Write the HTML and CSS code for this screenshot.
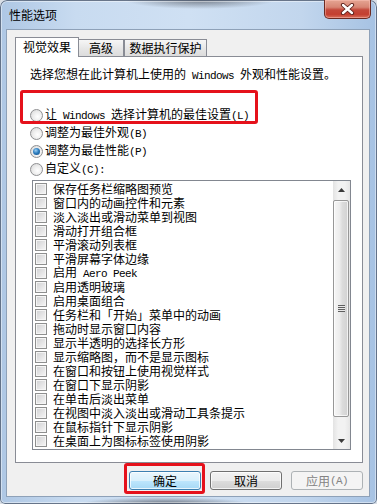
FILE: index.html
```html
<!DOCTYPE html>
<html lang="zh-CN">
<head>
<meta charset="utf-8">
<title>性能选项</title>
<link rel="stylesheet" href="styles.css">
</head>
<body>
<div class="window">
  <div class="titlebar">
    <span class="title">性能选项</span>
    <div class="close">
      <svg width="15" height="12" viewBox="0 0 15 12">
        <path d="M3 2 L12 10 M12 2 L3 10" stroke="#5a1e18" stroke-width="4.2" stroke-linecap="round"/>
        <path d="M3 2 L12 10 M12 2 L3 10" stroke="#ffffff" stroke-width="2.4" stroke-linecap="round"/>
      </svg>
    </div>
  </div>
  <div class="client">
    <div class="tabs">
      <div class="tab active">视觉效果</div>
      <div class="tab t2">高级</div>
      <div class="tab t3">数据执行保护</div>
    </div>
    <div class="panel">
      <p class="desc">选择您想在此计算机上使用的<span class="l"> Windows </span>外观和性能设置。</p>
      <div class="radios">
        <div class="radio"><span class="rb"></span><span class="txt">让<span class="l"> Windows </span>选择计算机的最佳设置<span class="l">(L)</span></span></div>
        <div class="radio"><span class="rb"></span><span class="txt">调整为最佳外观<span class="l">(B)</span></span></div>
        <div class="radio"><span class="rb on"></span><span class="txt">调整为最佳性能<span class="l">(P)</span></span></div>
        <div class="radio"><span class="rb"></span><span class="txt">自定义<span class="l">(C):</span></span></div>
      </div>
      <div class="listbox">
        <ul class="items">
          <li><span class="cb"></span><span class="txt">保存任务栏缩略图预览</span></li>
          <li><span class="cb"></span><span class="txt">窗口内的动画控件和元素</span></li>
          <li><span class="cb"></span><span class="txt">淡入淡出或滑动菜单到视图</span></li>
          <li><span class="cb"></span><span class="txt">滑动打开组合框</span></li>
          <li><span class="cb"></span><span class="txt">平滑滚动列表框</span></li>
          <li><span class="cb"></span><span class="txt">平滑屏幕字体边缘</span></li>
          <li><span class="cb"></span><span class="txt">启用<span class="l"> Aero Peek</span></span></li>
          <li><span class="cb"></span><span class="txt">启用透明玻璃</span></li>
          <li><span class="cb"></span><span class="txt">启用桌面组合</span></li>
          <li><span class="cb"></span><span class="txt">任务栏和「开始」菜单中的动画</span></li>
          <li><span class="cb"></span><span class="txt">拖动时显示窗口内容</span></li>
          <li><span class="cb"></span><span class="txt">显示半透明的选择长方形</span></li>
          <li><span class="cb"></span><span class="txt">显示缩略图，而不是显示图标</span></li>
          <li><span class="cb"></span><span class="txt">在窗口和按钮上使用视觉样式</span></li>
          <li><span class="cb"></span><span class="txt">在窗口下显示阴影</span></li>
          <li><span class="cb"></span><span class="txt">在单击后淡出菜单</span></li>
          <li><span class="cb"></span><span class="txt">在视图中淡入淡出或滑动工具条提示</span></li>
          <li><span class="cb"></span><span class="txt">在鼠标指针下显示阴影</span></li>
          <li><span class="cb"></span><span class="txt">在桌面上为图标标签使用阴影</span></li>
        </ul>
        <div class="scrollbar">
          <div class="sb-btn">
            <svg width="7" height="4" viewBox="0 0 7 4"><path d="M0 4 L3.5 0 L7 4 Z" fill="#3b3b3b"/></svg>
          </div>
          <div class="track">
            <div class="thumb"><span class="grip"></span></div>
          </div>
          <div class="sb-btn">
            <svg width="7" height="4" viewBox="0 0 7 4"><path d="M0 0 L7 0 L3.5 4 Z" fill="#3b3b3b"/></svg>
          </div>
        </div>
      </div>
    </div>
    <div class="buttons">
      <div class="btn default">确定</div>
      <div class="btn">取消</div>
      <div class="btn disabled">应用<span class="l">(A)</span></div>
    </div>
  </div>
  <div class="mark mark-radio"></div>
  <div class="mark mark-ok"></div>
</div>
</body>
</html>
```

FILE: styles.css
```css
* { box-sizing: border-box; }
html, body { margin: 0; padding: 0; }
body {
  width: 377px;
  height: 504px;
  overflow: hidden;
  background: #d9dee5;
  font-family: "Noto Sans CJK SC", "Noto Sans", sans-serif;
  font-size: 12px;
  color: #000;
}
.l {
  font-family: "Liberation Mono", "DejaVu Sans Mono", monospace;
  font-size: 11px;
  letter-spacing: -0.6px;
  white-space: pre;
}
.window {
  position: relative;
  width: 377px;
  height: 504px;
  border-radius: 7px 7px 5px 5px;
  padding: 0 7px 7px 6px;
  display: flex;
  flex-direction: column;
  background:
    radial-gradient(ellipse 75px 9px at 200px 0px, rgba(55,58,66,.6), rgba(55,58,66,0)),
    radial-gradient(ellipse 85px 7px at 165px 504px, rgba(45,48,56,.65), rgba(45,48,56,0)),
    linear-gradient(to right, #aec7e4 0%, #c8dbf0 20%, #cfe0f3 50%, #c2d6ed 80%, #a6c2e3 100%);
  box-shadow: inset 0 0 0 1px rgba(40,55,80,.65), inset 0 0 0 2px rgba(255,255,255,.45);
}
.titlebar {
  height: 29px;
  display: flex;
  align-items: flex-start;
}
.title {
  margin-top: 7px;
  padding-left: 3px;
  line-height: 16px;
  color: #000;
}
.close {
  margin-left: auto;
  margin-right: -1px;
  width: 47px;
  height: 19px;
  border: 1px solid #6b2a22;
  border-top: none;
  border-radius: 0 0 5px 5px;
  display: flex;
  align-items: center;
  justify-content: center;
  background: linear-gradient(to bottom, #e5a593 0%, #d78574 40%, #c4483a 55%, #c43f30 80%, #d8705c 100%);
  box-shadow: inset 0 0 0 1px rgba(255,200,190,.45);
}
.client {
  flex: 1;
  background: #f0f0f0;
  border: 1px solid #8ea1b8;
  padding: 7px 6px 6px 8px;
  display: flex;
  flex-direction: column;
}
.tabs {
  display: flex;
  align-items: flex-end;
  height: 19px;
}
.tab {
  height: 17px;
  border: 1px solid #898c95;
  border-bottom: none;
  background: linear-gradient(to bottom, #f6f6f6, #e6e6e6 55%, #dcdcdc);
  line-height: 16px;
  text-align: center;
}
.tab.active {
  width: 64px;
  height: 20px;
  line-height: 18px;
  background: #fff;
  margin-bottom: -1px;
  position: relative;
  z-index: 1;
}
.tab.t2 { width: 46px; margin-left: -1px; }
.tab.t3 { width: 83px; }
.panel {
  height: 407px;
  background: #fff;
  border: 1px solid #898c95;
  padding: 10px 11px 0 14px;
}
.desc {
  margin: 0;
  line-height: 14px;
  white-space: nowrap;
}
.radios { margin-top: 23px; }
.radio {
  height: 18px;
  display: flex;
  align-items: center;
  white-space: nowrap;
}
.rb {
  width: 13px;
  height: 13px;
  margin-right: 2px;
  border-radius: 50%;
  border: 1px solid #8f9092;
  background: radial-gradient(circle at 60% 60%, #ffffff 0%, #eeeeee 45%, #d2d2d2 100%);
  display: flex;
  align-items: center;
  justify-content: center;
}
.rb.on::after {
  content: "";
  width: 7px;
  height: 7px;
  border-radius: 50%;
  background: radial-gradient(circle at 40% 35%, #9fd0f4 0%, #2f7fc0 45%, #0d4680 100%);
}
.txt { line-height: 14px; }
.listbox {
  margin-top: 2px;
  margin-left: 2px;
  width: 319px;
  height: 270px;
  border: 1px solid #828790;
  background: #fff;
  display: flex;
}
.items {
  flex: 1;
  list-style: none;
  margin: 0;
  padding: 1px 0 1px 2px;
}
.items li {
  height: 14px;
  display: flex;
  align-items: center;
  white-space: nowrap;
}
.cb {
  width: 12px;
  height: 12px;
  margin-right: 6px;
  border: 1px solid #8e8f8f;
  background: linear-gradient(135deg, #cfd0d2 0%, #e3e3e4 50%, #f7f7f7 100%);
  box-shadow: inset 0 0 0 1px #f5f5f5;
}
.scrollbar {
  width: 17px;
  display: flex;
  flex-direction: column;
  background: linear-gradient(to right, #e3e3e3, #f2f2f2 30%, #f2f2f2 70%, #e6e6e6);
}
.sb-btn {
  height: 17px;
  display: flex;
  align-items: center;
  justify-content: center;
}
.track {
  flex: 1;
  padding: 2px 1px 0 0;
}
.thumb {
  height: 217px;
  border: 1px solid #979797;
  border-radius: 2px;
  background: linear-gradient(to right, #f6f6f6 0%, #ececec 40%, #dcdcdc 60%, #d2d2d2 100%);
  box-shadow: inset 0 0 0 1px rgba(255,255,255,.7);
  display: flex;
  align-items: center;
  justify-content: center;
}
.grip {
  width: 7px;
  height: 7px;
  background: repeating-linear-gradient(to bottom, #5f5f5f 0, #5f5f5f 1px, #e8e8e8 1px, #e8e8e8 2px);
}
.buttons {
  margin-top: 8px;
  display: flex;
  justify-content: flex-end;
  gap: 9px;
}
.btn {
  width: 72px;
  height: 19px;
  border: 1px solid #707070;
  border-radius: 3px;
  background: linear-gradient(to bottom, #f2f2f2 0%, #ebebeb 50%, #dddddd 51%, #cfcfcf 100%);
  box-shadow: inset 0 0 0 1px rgba(255,255,255,.75);
  display: flex;
  align-items: center;
  justify-content: center;
  line-height: 14px;
}
.btn.default {
  border-color: #3c7fb1;
  background: linear-gradient(to bottom, #eaf6fd 0%, #d9f0fc 50%, #bee6fd 51%, #a7d9f5 100%);
}
.btn.disabled {
  border-color: #adb2b5;
  background: #f4f4f4;
  color: #838383;
  box-shadow: none;
}
.mark {
  position: absolute;
  border: 3px solid #e5111b;
  border-radius: 3px;
  pointer-events: none;
}
.mark-radio { left: 20px; top: 90px; width: 238px; height: 34px; }
.mark-ok { left: 124px; top: 463px; width: 81px; height: 31px; }
```
